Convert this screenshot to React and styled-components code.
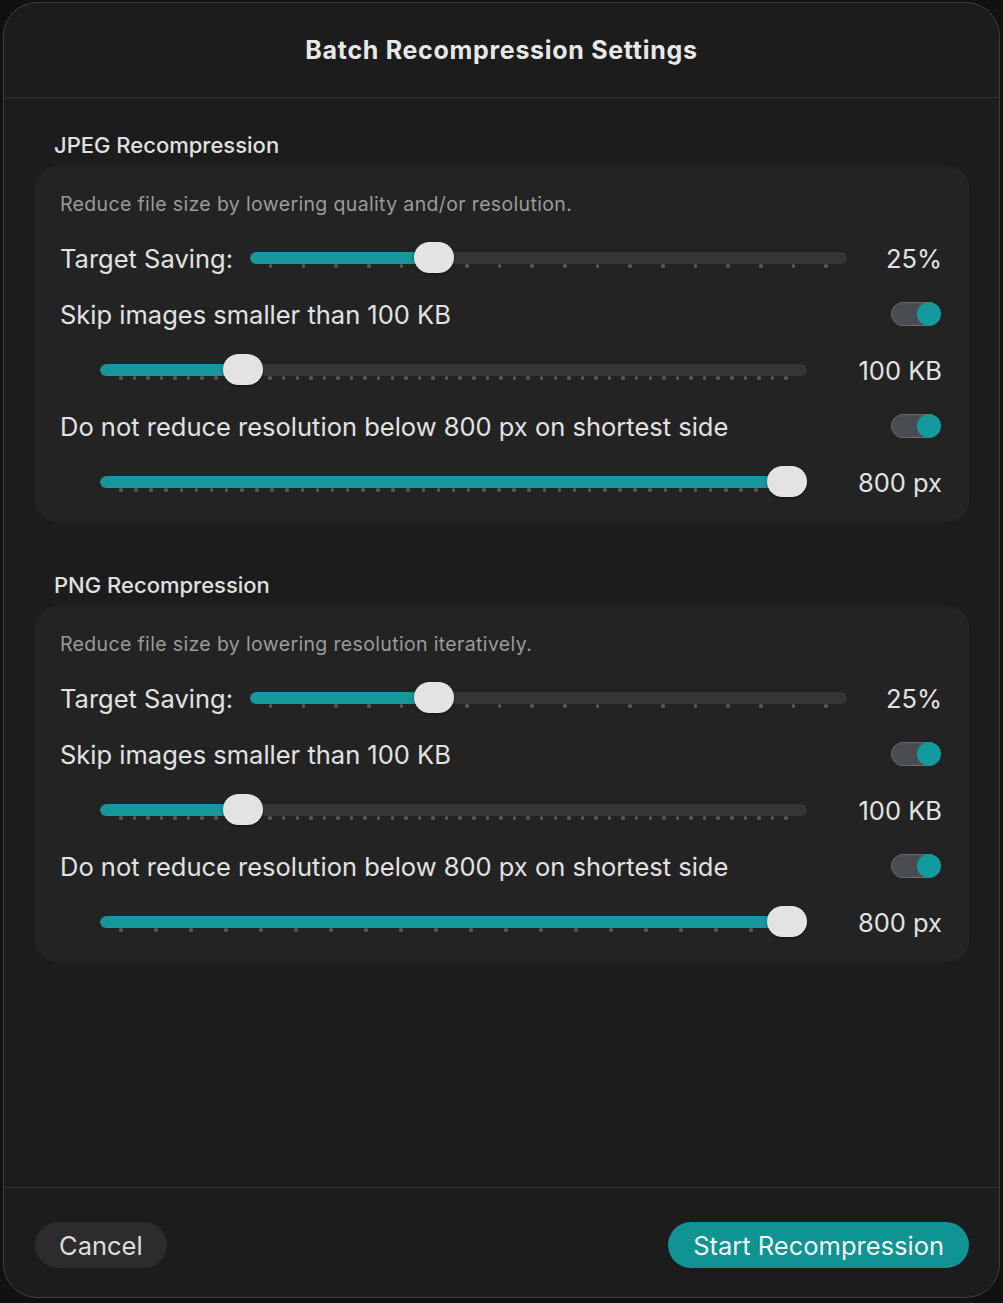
import React from "react";
import styled, { createGlobalStyle } from "styled-components";

const GlobalStyle = createGlobalStyle`
    html, body {
        margin: 0;
        padding: 0;
        background: #111111;
        font-family: Inter, "Noto Sans", "Liberation Sans", sans-serif;
        -webkit-font-smoothing: antialiased;
    }
    * { box-sizing: border-box; }
`;

const Dialog = styled.div`
    width: 997px;
    height: 1296px;
    margin: 2px 3px;
    background-color: #1c1c1c;
    border: 1px solid #3d3d3d;
    border-radius: 34px;
    display: flex;
    flex-direction: column;
    overflow: hidden;
`;

const Header = styled.div`
    height: 95px;
    display: flex;
    align-items: center;
    justify-content: center;
    border-bottom: 1px solid #2f2f2f;
    color: #e8e8e8;
    font-size: 25px;
    font-weight: 700;
    letter-spacing: 0.7px;
`;

const Body = styled.div`
    flex: 1;
    padding: 34px 30px 0 31px;
`;

const SectionTitle = styled.div`
    padding-left: 19px;
    line-height: 26px;
    font-size: 22px;
    font-weight: 500;
    color: #e0e0e0;
    margin-bottom: 8px;
`;

const Card = styled.div`
    background-color: #232323;
    border-radius: 22px;
    padding: 26px 27px 12px 25px;
    margin-bottom: 50px;
`;

const Description = styled.div`
    line-height: 24px;
    font-size: 19.5px;
    letter-spacing: 0.35px;
    color: #9b9b9b;
    margin-bottom: 14px;
`;

const Row = styled.div`
    height: 56px;
    display: flex;
    align-items: center;
    padding-left: ${(p) => (p.$indent ? "40px" : "0")};
`;

const Label = styled.div`
    font-size: 25.5px;
    color: #e2e2e2;
    white-space: nowrap;
    margin-right: ${(p) => (p.$gap ? p.$gap : "0")};
`;

const Value = styled.div`
    width: ${(p) => p.$width};
    flex-shrink: 0;
    text-align: right;
    font-size: 25.5px;
    color: #e2e2e2;
    white-space: nowrap;
`;

const Spacer = styled.div`
    flex: 1;
`;

const SliderWrap = styled.div`
    flex: 1;
    position: relative;
    height: 40px;
`;

const Track = styled.div`
    position: absolute;
    left: 0;
    right: 0;
    top: 14px;
    height: 12px;
    border-radius: 6px;
    background-color: #363636;
    overflow: hidden;
`;

const Fill = styled.div`
    height: 100%;
    background-color: #16979b;
    border-radius: 6px;
`;

const Ticks = styled.div`
    position: absolute;
    left: 19px;
    right: 19px;
    top: 26px;
    height: 4px;
    display: flex;
    justify-content: space-between;
`;

const Tick = styled.span`
    width: 3.5px;
    height: 3.5px;
    border-radius: 50%;
    background-color: #595959;
`;

const Thumb = styled.div`
    position: absolute;
    top: 4px;
    width: 40px;
    height: 31px;
    border-radius: 16px;
    background-color: #e3e3e3;
    box-shadow: 0 1px 3px rgba(0, 0, 0, 0.45);
`;

const Toggle = styled.div`
    width: 49px;
    height: 24px;
    border-radius: 12px;
    background-color: #484b50;
    border: 1.5px solid #6c6c6c;
    position: relative;
    margin-right: 2px;

    &::after {
        content: "";
        position: absolute;
        right: -1.5px;
        top: -1.5px;
        width: 24px;
        height: 24px;
        border-radius: 50%;
        background-color: #13999b;
    }
`;

const Footer = styled.div`
    height: 110px;
    border-top: 1px solid #2f2f2f;
    display: flex;
    align-items: flex-start;
    justify-content: space-between;
    padding: 34px 30px 0 31px;
`;

const Button = styled.button`
    height: 46px;
    border: none;
    border-radius: 23px;
    padding: 0 ${(p) => (p.$primary ? "25px" : "24px")};
    font-family: inherit;
    font-size: 25.5px;
    color: ${(p) => (p.$primary ? "#f4f4f4" : "#dedede")};
    background-color: ${(p) => (p.$primary ? "#0f9393" : "#2c2c2c")};
`;

const Slider = ({ fraction, ticks }) => {
    const left = `calc(${fraction} * (100% - 40px))`;
    const fill = `calc(${fraction} * (100% - 40px) + 20px)`;
    return (
        <SliderWrap>
            <Track>
                <Fill style={{ width: fill }} />
            </Track>
            <Ticks>
                {Array.from({ length: ticks }).map((_, i) => (
                    <Tick key={"tick" + i} />
                ))}
            </Ticks>
            <Thumb style={{ left }} />
        </SliderWrap>
    );
};

const sections = [
    {
        title: "JPEG Recompression",
        desc: "Reduce file size by lowering quality and/or resolution.",
        sizeTicks: 50,
        resTicks: 45,
    },
    {
        title: "PNG Recompression",
        desc: "Reduce file size by lowering resolution iteratively.",
        sizeTicks: 50,
        resTicks: 20,
    },
];

const App = () => {
    return (
        <>
            <GlobalStyle />
            <Dialog>
                <Header>Batch Recompression Settings</Header>
                <Body>
                    {sections.map((s) => (
                        <div key={s.title}>
                            <SectionTitle>{s.title}</SectionTitle>
                            <Card>
                                <Description>{s.desc}</Description>
                                <Row>
                                    <Label $gap="17px">Target Saving:</Label>
                                    <Slider fraction={5 / 17} ticks={18} />
                                    <Value $width="95px">25%</Value>
                                </Row>
                                <Row>
                                    <Label>Skip images smaller than 100 KB</Label>
                                    <Spacer />
                                    <Toggle />
                                </Row>
                                <Row $indent>
                                    <Slider fraction={9 / 49} ticks={s.sizeTicks} />
                                    <Value $width="135px">100 KB</Value>
                                </Row>
                                <Row>
                                    <Label>Do not reduce resolution below 800 px on shortest side</Label>
                                    <Spacer />
                                    <Toggle />
                                </Row>
                                <Row $indent>
                                    <Slider fraction={1} ticks={s.resTicks} />
                                    <Value $width="135px">800 px</Value>
                                </Row>
                            </Card>
                        </div>
                    ))}
                </Body>
                <Footer>
                    <Button>Cancel</Button>
                    <Button $primary>Start Recompression</Button>
                </Footer>
            </Dialog>
        </>
    );
};

export default App;
